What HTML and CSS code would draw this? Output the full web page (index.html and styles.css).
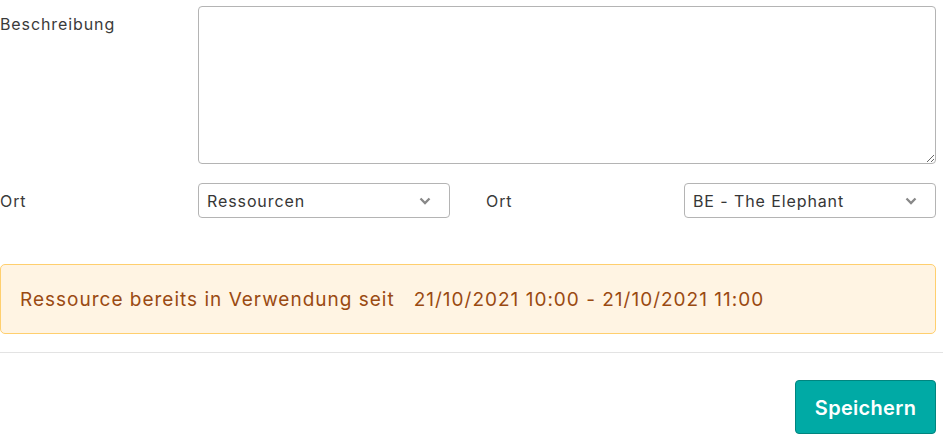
FILE: index.html
```html
<!DOCTYPE html>
<html lang="de">
<head>
<meta charset="utf-8">
<title>Form</title>
<link rel="stylesheet" href="styles.css">
</head>
<body>
<form class="form">
  <div class="row row-desc">
    <label class="label">Beschreibung</label>
    <textarea class="textarea"></textarea>
  </div>
  <div class="row row-ort">
    <div class="half">
      <label class="label">Ort</label>
      <div class="select"><span>Ressourcen</span><svg class="chev" viewBox="0 0 12 8" width="12" height="8"><path d="M1.5 1.5 L6 6 L10.5 1.5" fill="none" stroke="#888" stroke-width="2.3"/></svg></div>
    </div>
    <div class="half">
      <label class="label">Ort</label>
      <div class="select"><span>BE - The Elephant</span><svg class="chev" viewBox="0 0 12 8" width="12" height="8"><path d="M1.5 1.5 L6 6 L10.5 1.5" fill="none" stroke="#888" stroke-width="2.3"/></svg></div>
    </div>
  </div>
  <div class="alert">Ressource bereits in Verwendung seit&nbsp;&nbsp; 21/10/2021 10:00 - 21/10/2021 11:00</div>
</form>
<hr class="divider">
<div class="actions">
  <button type="button" class="btn">Speichern</button>
</div>
</body>
</html>
```
FILE: styles.css
```css
* { box-sizing: border-box; }
html, body { margin: 0; padding: 0; background: #fff; }
body {
  font-family: Inter, "Noto Sans", sans-serif;
  color: #3d3d3d;
  font-size: 16px;
  letter-spacing: 0.9px;
  width: 943px;
}
.form { width: 936px; padding-top: 6px; }
.row { display: flex; }
.label {
  width: 198px;
  flex: none;
  font-size: 16px;
  line-height: 20px;
  color: #3a3a3a;
}
.row-desc .label { padding-top: 8px; }
.textarea {
  display: block;
  width: 738px;
  height: 158px;
  border: 1px solid #b4b4b4;
  border-radius: 4px;
  resize: both;
  margin: 0;
  font: inherit;
}
.row-ort { margin-top: 19px; gap: 36px; }
.half { display: flex; align-items: center; width: 450px; }
.select {
  width: 252px;
  height: 35px;
  border: 1px solid #b4b4b4;
  border-radius: 4px;
  display: flex;
  align-items: center;
  justify-content: space-between;
  padding: 0 18px 0 8px;
  font-size: 16px;
  color: #363636;
}
.chev { display: block; }
.alert {
  margin-top: 46px;
  height: 70px;
  background: #fff4e3;
  border: 1px solid #ffcf6e;
  border-radius: 5px;
  color: #9a4a12;
  font-size: 19px;
  letter-spacing: 1px;
  display: flex;
  align-items: center;
  padding-left: 19px;
}
.divider {
  margin: 18px 0 0;
  border: 0;
  border-top: 1px solid #e3e3e3;
  width: 943px;
}
.actions { width: 936px; display: flex; justify-content: flex-end; padding-top: 27px; }
.btn {
  width: 141px;
  height: 54px;
  background: #00aaa5;
  border: 1px solid #00857f;
  border-radius: 4px;
  color: #fff;
  font-family: Inter, sans-serif;
  font-size: 20px;
  font-weight: 600;
  letter-spacing: 0.3px;
  padding-top: 2px;
}
```
